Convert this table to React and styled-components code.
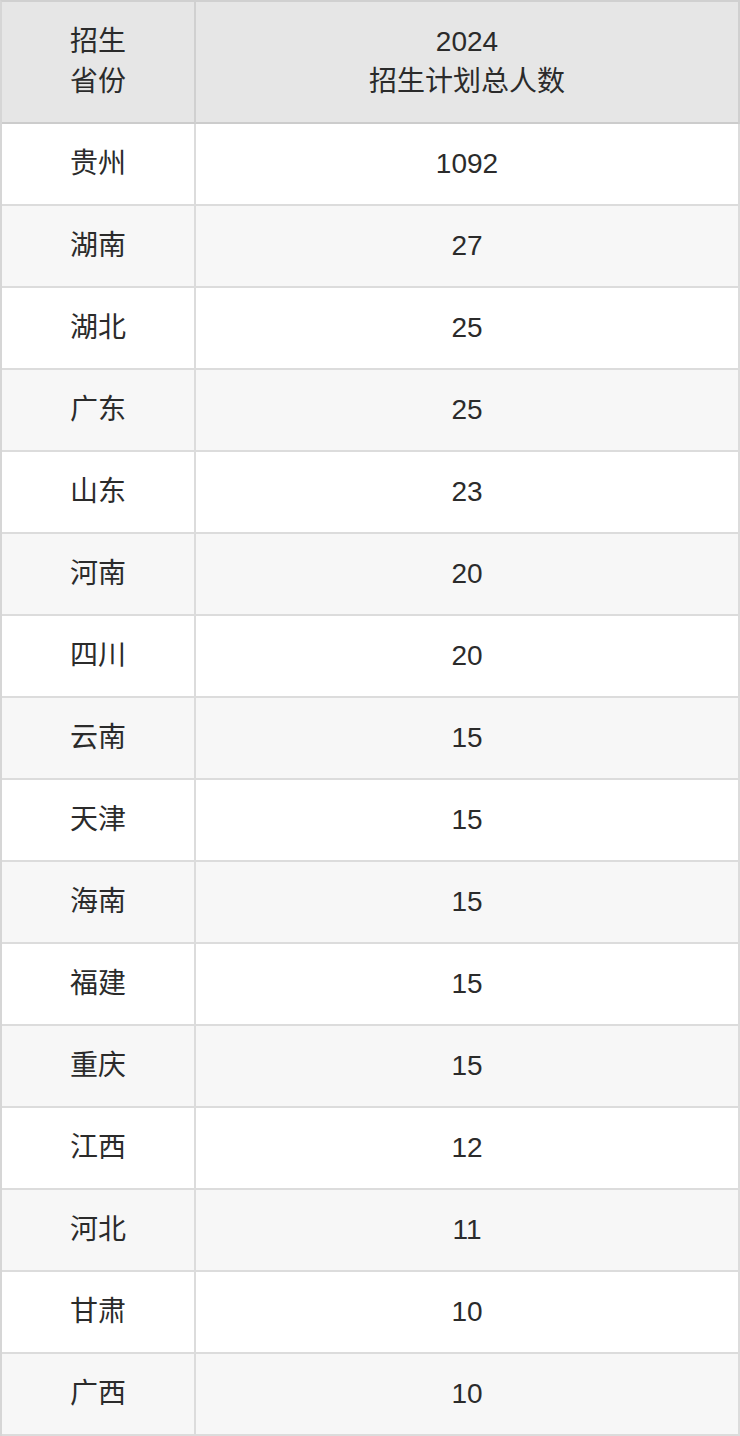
import styled, { createGlobalStyle } from "styled-components";

const GlobalStyle = createGlobalStyle`
  body {
    margin: 0;
    background: #fff;
    font-family: "Liberation Sans", "Noto Sans CJK SC", sans-serif;
  }
`;

const Table = styled.div`
  width: 740px;
  box-sizing: border-box;
  border-top: 2px solid #d0d0d0;
  border-left: 2px solid #d6d6d6;
  color: #2b2b2b;
  font-size: 28px;
`;

const Row = styled.div`
  display: grid;
  grid-template-columns: 194px 1fr;
  height: ${(p) => (p.$head ? "122px" : "82px")};
  background: ${(p) => (p.$head ? "#e6e6e6" : p.$alt ? "#f7f7f7" : "#fff")};
`;

const Cell = styled.div`
  box-sizing: border-box;
  display: flex;
  flex-direction: column;
  align-items: center;
  justify-content: center;
  text-align: center;
  line-height: 40px;
  border-right: 2px solid ${(p) => (p.$head ? "#d0d0d0" : "#dcdcdc")};
  border-bottom: 2px solid ${(p) => (p.$head ? "#cccccc" : "#dcdcdc")};
`;

const rows = [
  ["贵州", "1092"],
  ["湖南", "27"],
  ["湖北", "25"],
  ["广东", "25"],
  ["山东", "23"],
  ["河南", "20"],
  ["四川", "20"],
  ["云南", "15"],
  ["天津", "15"],
  ["海南", "15"],
  ["福建", "15"],
  ["重庆", "15"],
  ["江西", "12"],
  ["河北", "11"],
  ["甘肃", "10"],
  ["广西", "10"],
];

const App = () => {
  return (
    <>
      <GlobalStyle />
      <Table>
        <Row $head>
          <Cell $head>
            <span>招生</span>
            <span>省份</span>
          </Cell>
          <Cell $head>
            <span>2024</span>
            <span>招生计划总人数</span>
          </Cell>
        </Row>
        {rows.map(([prov, num], i) => (
          <Row key={prov + i} $alt={i % 2 === 1}>
            <Cell>{prov}</Cell>
            <Cell>{num}</Cell>
          </Row>
        ))}
      </Table>
    </>
  );
};

export default App;
